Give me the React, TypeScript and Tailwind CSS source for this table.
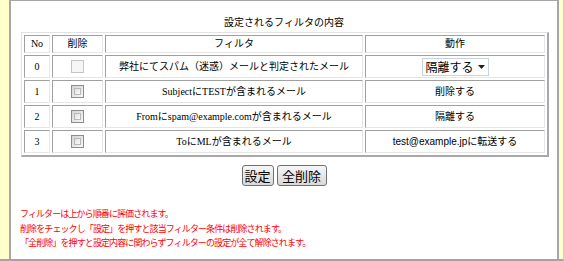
import type { ReactNode } from "react";

type FilterRow = {
  no: number;
  filter: ReactNode;
  action: ReactNode;
  locked?: boolean;
};

const sans = "font-[family-name:'Liberation_Sans','Noto_Sans_CJK_JP',sans-serif]";

function ActionSelect() {
  return (
    <div className="mx-auto flex h-[18px] w-[67px] items-center justify-between border border-[#c9d2de] bg-white pl-[3px] pr-[3px] text-[12px] leading-none font-[family-name:'Noto_Sans_CJK_JP',sans-serif]">
      <span>隔離する</span>
      <svg width="7" height="4" viewBox="0 0 7 4">
        <path d="M0 0h7L3.5 4z" fill="#222" />
      </svg>
    </div>
  );
}

const rows: FilterRow[] = [
  {
    no: 0,
    filter: "弊社にてスパム（迷惑）メールと判定されたメール",
    action: <ActionSelect />,
    locked: true,
  },
  { no: 1, filter: "SubjectにTESTが含まれるメール", action: "削除する" },
  { no: 2, filter: "Fromにspam@example.comが含まれるメール", action: "隔離する" },
  {
    no: 3,
    filter: "ToにMLが含まれるメール",
    action: (
      <>
        <span className={sans}>test@example.jp</span>に転送する
      </>
    ),
  },
];

const cell =
  "border border-t-[#a0a0a0] border-l-[#a0a0a0] border-b-[#e6e6e6] border-r-[#e6e6e6] p-0 text-center align-middle";

function CheckBox({ locked }: { locked?: boolean }) {
  return (
    <span
      className={
        locked
          ? "mx-auto block h-[13px] w-[13px] border border-[#c4c4c4] bg-[#f6f6f6]"
          : "mx-auto block h-[13px] w-[13px] border border-[#8c8c8c] bg-gradient-to-br from-[#d4d4d4] to-[#f8f8f8] p-[2px]"
      }
    >
      {!locked && <span className="block h-full w-full border border-[#b8b8b8] bg-gradient-to-br from-[#e0e0e0] to-[#fbfbfb]" />}
    </span>
  );
}

function Button({ label, width }: { label: string; width: string }) {
  return (
    <button
      className={`${width} h-[21px] rounded-[3px] border border-[#707070] bg-gradient-to-b from-[#f6f6f6] to-[#d9d9d9] text-[13px] leading-none font-[family-name:'Noto_Sans_CJK_JP',sans-serif]`}
    >
      {label}
    </button>
  );
}

export default function App() {
  return (
    <div className="flex h-[261px] w-[564px] border-r border-b-2 border-r-[#cfcfcf] border-b-[#a3a3a3] bg-[#ffffcc] pl-[9px] pr-[4px] text-black font-[family-name:'Liberation_Serif','Noto_Sans_CJK_JP',serif]">
      <div className="flex-1 border-x-2 border-t border-[#a6a6a6] bg-white pt-[14px]">
        <p className="text-center text-[10px] leading-[14px] font-[family-name:'Noto_Sans_CJK_JP',sans-serif]">
          設定されるフィルタの内容
        </p>

        <table className="mt-[3px] ml-[10px] w-[528px] border-separate border-spacing-[2px] border border-t-[#e2e2e2] border-l-[#e2e2e2] border-r-2 border-b-2 border-r-[#a8a8a8] border-b-[#a8a8a8] text-[10px] leading-none">
          <thead>
            <tr>
              <th className={`${cell} h-[18px] w-[26px] font-normal`}>No</th>
              <th className={`${cell} w-[51px] font-normal`}>削除</th>
              <th className={`${cell} w-[258px] font-normal`}>フィルタ</th>
              <th className={`${cell} font-normal`}>動作</th>
            </tr>
          </thead>
          <tbody>
            {rows.map((r) => (
              <tr key={r.no}>
                <td className={`${cell} h-[23px]`}>{r.no}</td>
                <td className={cell}>
                  <CheckBox locked={r.locked} />
                </td>
                <td className={cell}>{r.filter}</td>
                <td className={cell}>{r.action}</td>
              </tr>
            ))}
          </tbody>
        </table>

        <div className="mt-[8px] flex justify-center gap-[3px]">
          <Button label="設定" width="w-[32px]" />
          <Button label="全削除" width="w-[50px]" />
        </div>

        <div className="mt-[21px] ml-[9px] text-[9px] leading-[14.5px] tracking-[-0.9px] text-[#ff0000] font-[family-name:'Noto_Sans_CJK_JP',sans-serif]">
          <p>フィルターは上から順番に評価されます。</p>
          <p>削除をチェックし「設定」を押すと該当フィルター条件は削除されます。</p>
          <p>「全削除」を押すと設定内容に関わらずフィルターの設定が全て解除されます。</p>
        </div>
      </div>
    </div>
  );
}
